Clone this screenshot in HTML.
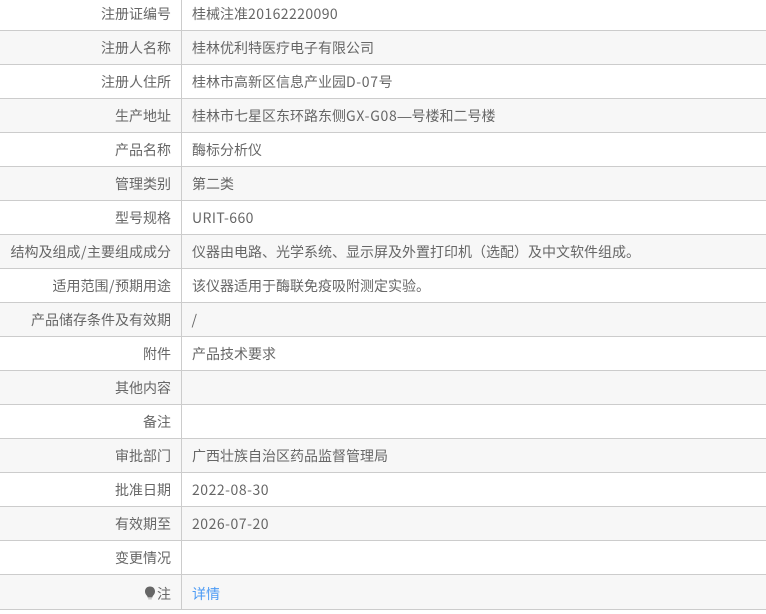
<!DOCTYPE html>
<html lang="zh-CN">
<head>
<meta charset="utf-8">
<style>
html,body{margin:0;padding:0;background:#fff;}
body{width:766px;height:612px;overflow:hidden;position:relative;font-family:"Noto Sans CJK SC","Liberation Sans",sans-serif;font-size:14px;color:#666;}
.r{position:absolute;left:0;width:766px;height:33px;line-height:35px;border-bottom:1px solid #ccc;box-sizing:content-box;white-space:nowrap;}
.r.g{background:#f7f7f7;}
.l{position:absolute;left:0;top:0;width:171px;text-align:right;}
.v{position:absolute;left:192px;top:0;}
.n{letter-spacing:.42px;}
.d{letter-spacing:.52px;}
.s{padding:0 .5px;}
.dash{font-family:"Liberation Sans",sans-serif;}
.line{position:absolute;left:181px;top:0;width:1px;height:610px;background:#ccc;}
a{color:#4c9bf5;text-decoration:none;}
svg{vertical-align:-1px;}
</style>
</head>
<body>
<div class="r" style="top:-3px"><span class="l">注册证编号</span><span class="v">桂械注准<span class="n">20162220090</span></span></div>
<div class="r g" style="top:31px"><span class="l">注册人名称</span><span class="v">桂林优利特医疗电子有限公司</span></div>
<div class="r" style="top:65px"><span class="l">注册人住所</span><span class="v">桂林市高新区信息产业园<span class="d" style="letter-spacing:.65px">D-07</span>号</span></div>
<div class="r g" style="top:99px"><span class="l">生产地址</span><span class="v">桂林市七星区东环路东侧<span class="d" style="letter-spacing:.7px">GX-G08</span><span class="dash">—</span>号楼和二号楼</span></div>
<div class="r" style="top:133px"><span class="l">产品名称</span><span class="v">酶标分析仪</span></div>
<div class="r g" style="top:167px"><span class="l">管理类别</span><span class="v">第二类</span></div>
<div class="r" style="top:201px"><span class="l">型号规格</span><span class="v"><span class="n">URIT-660</span></span></div>
<div class="r g" style="top:235px"><span class="l">结构及组成<span class="s">/</span>主要组成成分</span><span class="v">仪器由电路、光学系统、显示屏及外置打印机（选配）及中文软件组成。</span></div>
<div class="r" style="top:269px"><span class="l">适用范围<span class="s">/</span>预期用途</span><span class="v">该仪器适用于酶联免疫吸附测定实验。</span></div>
<div class="r g" style="top:303px"><span class="l">产品储存条件及有效期</span><span class="v" style="left:191.5px">/</span></div>
<div class="r" style="top:337px"><span class="l">附件</span><span class="v">产品技术要求</span></div>
<div class="r g" style="top:371px"><span class="l">其他内容</span></div>
<div class="r" style="top:405px"><span class="l">备注</span></div>
<div class="r g" style="top:439px"><span class="l">审批部门</span><span class="v">广西壮族自治区药品监督管理局</span></div>
<div class="r" style="top:473px"><span class="l">批准日期</span><span class="v"><span class="d">2022-08-30</span></span></div>
<div class="r g" style="top:507px"><span class="l">有效期至</span><span class="v"><span class="d">2026-07-20</span></span></div>
<div class="r" style="top:541px"><span class="l">变更情况</span></div>
<div class="r g" style="top:575px;height:34px;line-height:39px"><span class="l"><svg width="12" height="14" viewBox="0 0 12 14" style="margin-right:1px"><path d="M6 0.5C3 0.5 1 2.6 1 5.4c0 2.2 1.2 3.4 2.1 4.6.4.6.5 1 .6 1.5h4.6c.1-.5.2-.9.6-1.5C9.8 8.8 11 7.6 11 5.4 11 2.6 9 .5 6 .5z" fill="#666"/><path d="M4.2 12.2h3.6v1.2H4.2z" fill="#bbb"/></svg>注</span><span class="v"><a>详情</a></span></div>
<div class="line"></div>
</body>
</html>
